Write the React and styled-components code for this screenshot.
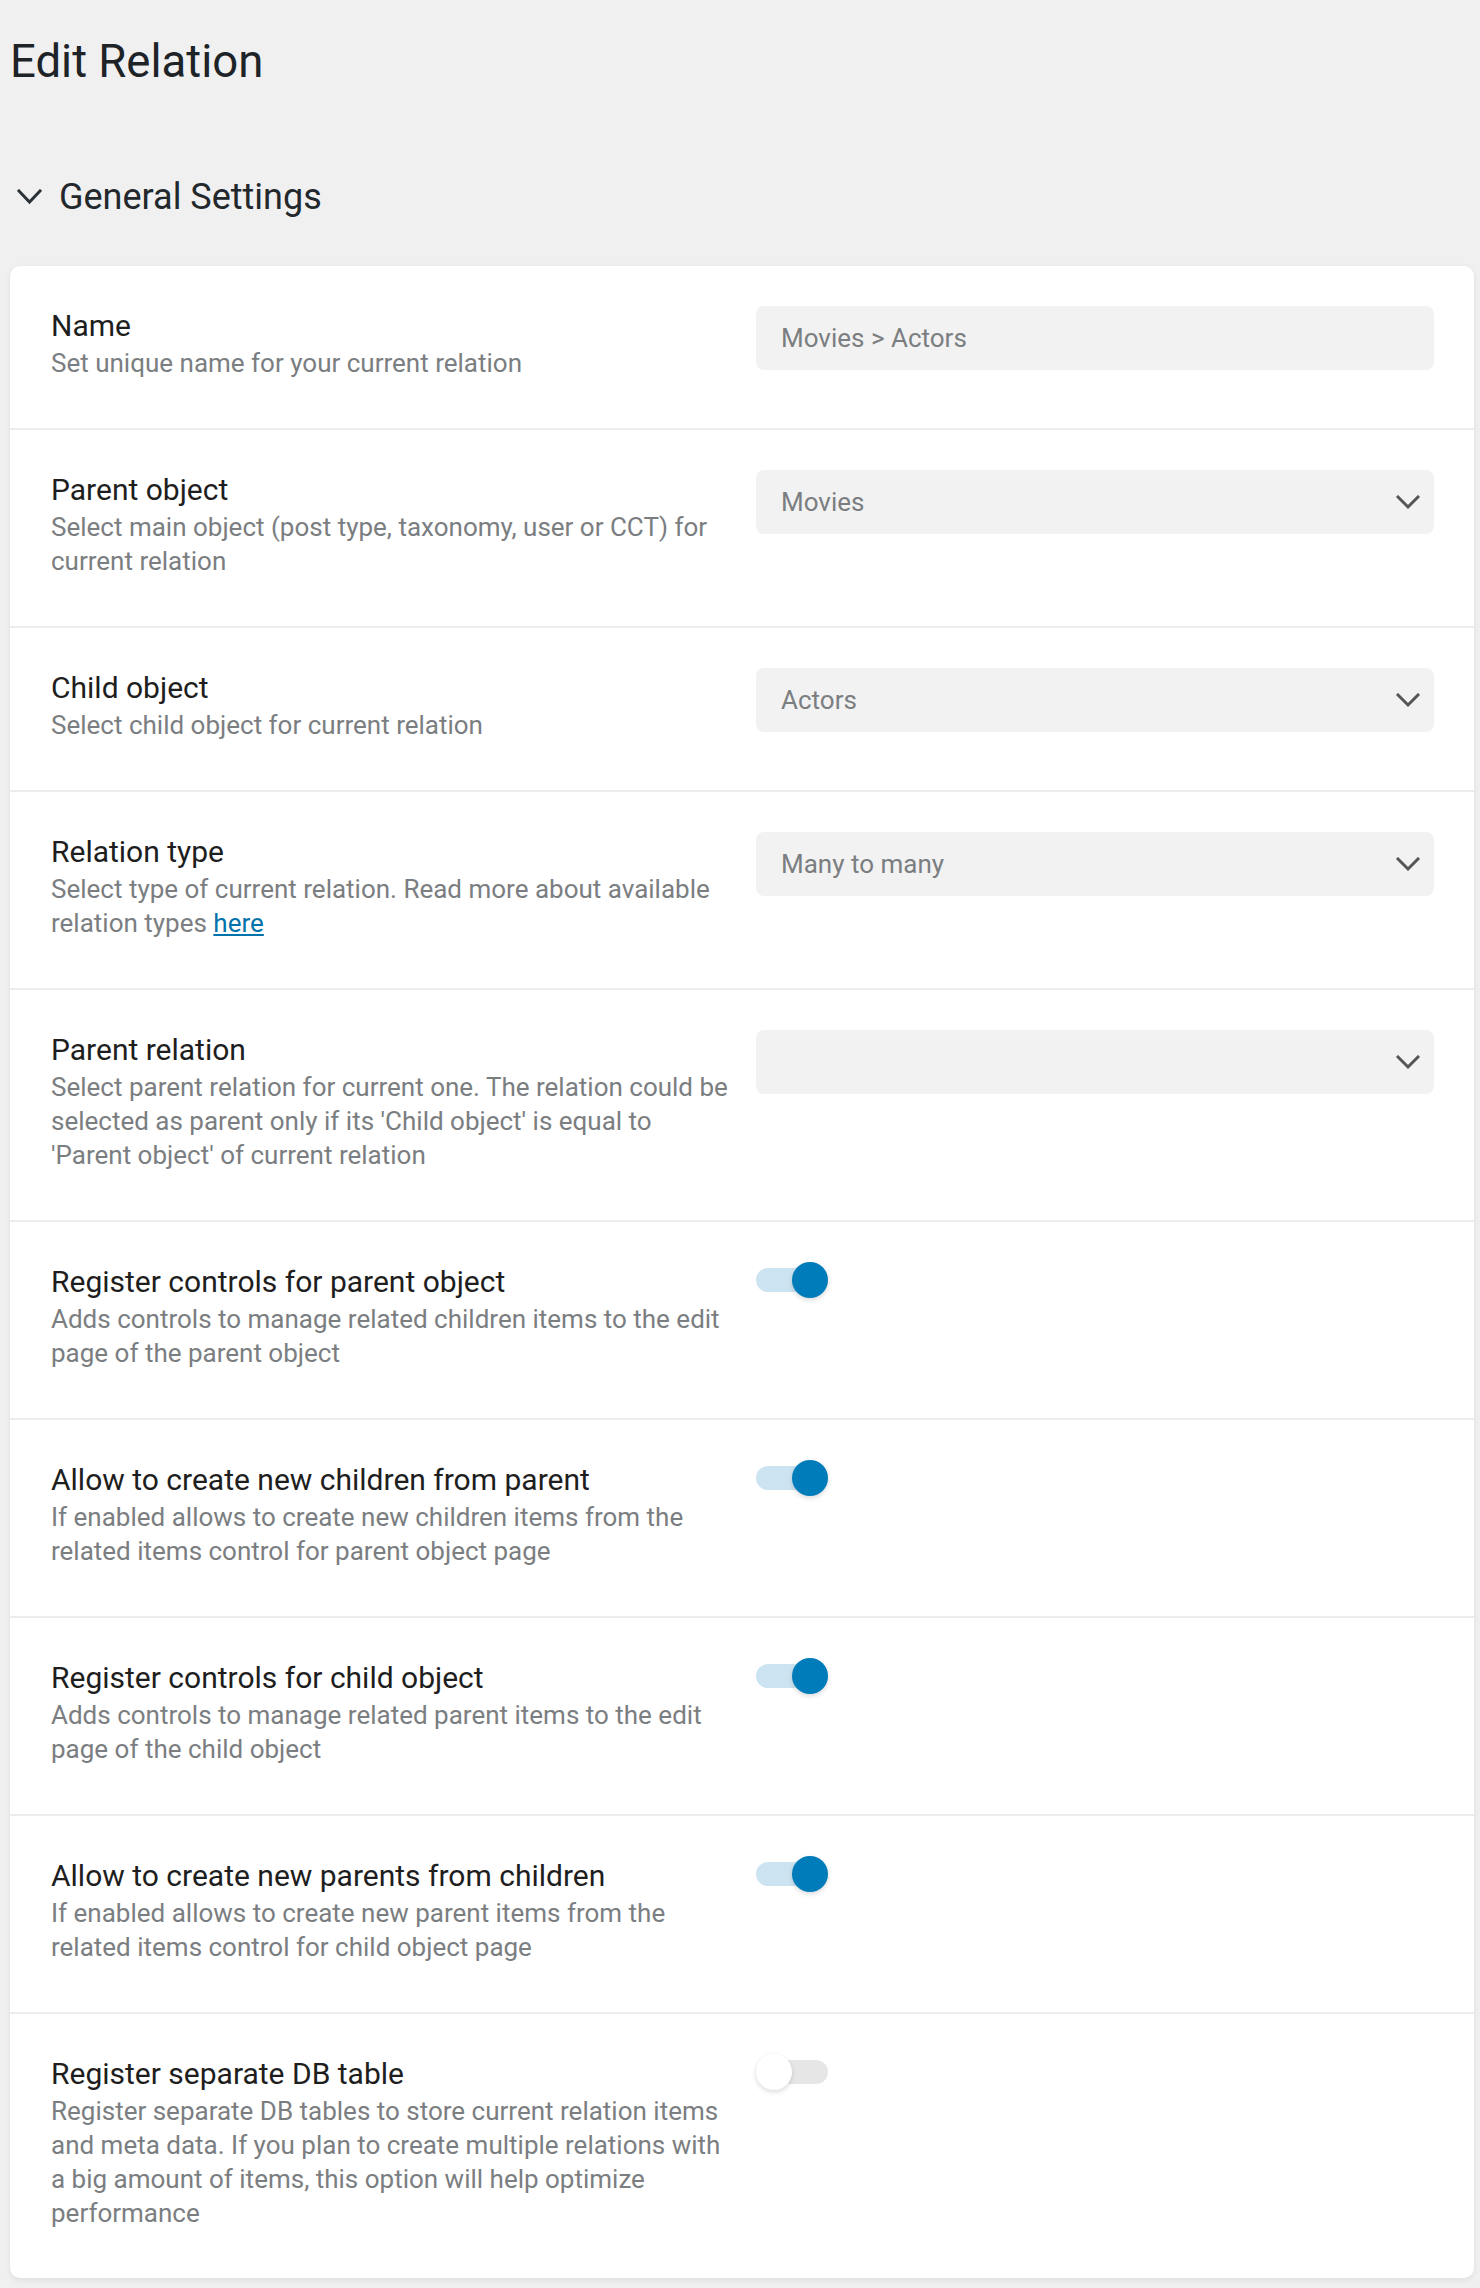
import React from "react";
import styled, { createGlobalStyle } from "styled-components";

const Global = createGlobalStyle`
  html, body { margin: 0; padding: 0; background: #f0f0f0; }
  body { font-family: Roboto, "Noto Sans", "Liberation Sans", sans-serif; }
  * { box-sizing: border-box; }
`;

const Page = styled.div`
  padding: 33px 6px 13px 10px;
  min-height: 2288px;
  background: #f0f0f0;
`;

const Title = styled.h1`
  margin: 0;
  font-size: 45.5px;
  line-height: 57px;
  font-weight: 400;
  color: #1d2327;
`;

const SectionHeader = styled.div`
  display: flex;
  align-items: center;
  gap: 17px;
  margin-top: 83px;
  padding-left: 7px;
  height: 48px;
  margin-bottom: 45px;
`;

const SectionTitle = styled.h2`
  margin: 0;
  font-size: 36px;
  line-height: 48px;
  font-weight: 400;
  color: #23282d;
`;

const Card = styled.div`
  background: #fff;
  border-radius: 10px;
  box-shadow: 0 2px 6px rgba(0, 0, 0, 0.08);
  overflow: hidden;
`;

const Row = styled.div`
  display: grid;
  grid-template-columns: 1fr 678px;
  column-gap: 25px;
  padding: 40px 40px 48px 41px;
  border-top: ${(p) => (p.$first ? "none" : "2px solid #ececec")};
`;

const Info = styled.div`
  display: flex;
  flex-direction: column;
`;

const Label = styled.div`
  font-size: 30px;
  line-height: 40px;
  color: #1e1e1e;
`;

const Desc = styled.div`
  font-size: 26px;
  line-height: 34px;
  color: #7b7e81;
`;

const Link = styled.a`
  color: #0073aa;
  text-decoration: underline;
`;

const Field = styled.div`
  height: 64px;
  border-radius: 8px;
  background: #f2f2f2;
  display: flex;
  align-items: center;
  justify-content: space-between;
  padding: 0 14px 0 25px;
  font-size: 26px;
  color: #7b7e81;
`;

const Toggle = styled.div`
  position: relative;
  width: 72px;
  height: 36px;
  display: flex;
  align-items: center;
`;

const Track = styled.div`
  width: 100%;
  height: 24px;
  border-radius: 12px;
  background: ${(p) => (p.$on ? "#cce4f1" : "#e6e6e6")};
`;

const Knob = styled.div`
  position: absolute;
  top: 0;
  left: ${(p) => (p.$on ? "36px" : "0")};
  width: 36px;
  height: 36px;
  border-radius: 50%;
  background: ${(p) => (p.$on ? "#007cba" : "#fff")};
  box-shadow: 0 2px 5px rgba(0, 0, 0, 0.15);
`;

const Chevron = ({ w = 24, h = 11, color = "#555", sw = 3 }) => (
  <svg width={w} height={h + 4} viewBox={`0 0 ${w} ${h + 4}`} fill="none">
    <polyline
      points={`2,2 ${w / 2},${h + 1} ${w - 2},2`}
      stroke={color}
      strokeWidth={sw}
      strokeLinecap="square"
      strokeLinejoin="miter"
    />
  </svg>
);

const rows = [
  { label: "Name", desc: "Set unique name for your current relation", type: "input", value: "Movies > Actors" },
  { label: "Parent object", desc: "Select main object (post type, taxonomy, user or CCT) for current relation", type: "select", value: "Movies" },
  { label: "Child object", desc: "Select child object for current relation", type: "select", value: "Actors" },
  {
    label: "Relation type",
    desc: (
      <>
        Select type of current relation. Read more about available relation types <Link href="#">here</Link>
      </>
    ),
    type: "select",
    value: "Many to many",
  },
  {
    label: "Parent relation",
    desc: "Select parent relation for current one. The relation could be selected as parent only if its 'Child object' is equal to 'Parent object' of current relation",
    type: "select",
    value: "",
  },
  { label: "Register controls for parent object", desc: "Adds controls to manage related children items to the edit page of the parent object", type: "toggle", on: true },
  { label: "Allow to create new children from parent", desc: "If enabled allows to create new children items from the related items control for parent object page", type: "toggle", on: true },
  { label: "Register controls for child object", desc: "Adds controls to manage related parent items to the edit page of the child object", type: "toggle", on: true },
  { label: "Allow to create new parents from children", desc: "If enabled allows to create new parent items from the related items control for child object page", type: "toggle", on: true },
  {
    label: "Register separate DB table",
    desc: "Register separate DB tables to store current relation items and meta data. If you plan to create multiple relations with a big amount of items, this option will help optimize performance",
    type: "toggle",
    on: false,
  },
];

function Control({ row }) {
  if (row.type === "toggle") {
    return (
      <div>
        <Toggle>
          <Track $on={row.on} />
          <Knob $on={row.on} />
        </Toggle>
      </div>
    );
  }
  return (
    <div>
      <Field>
        <span>{row.value}</span>
        {row.type === "select" && <Chevron />}
      </Field>
    </div>
  );
}

export default function App() {
  return (
    <>
      <Global />
      <Page>
        <Title>Edit Relation</Title>
        <SectionHeader>
          <Chevron w={25} h={12} color="#2c3338" sw={3} />
          <SectionTitle>General Settings</SectionTitle>
        </SectionHeader>
        <Card>
          {rows.map((r, i) => (
            <Row key={r.label} $first={i === 0}>
              <Info>
                <Label>{r.label}</Label>
                <Desc>{r.desc}</Desc>
              </Info>
              <Control row={r} />
            </Row>
          ))}
        </Card>
      </Page>
    </>
  );
}
